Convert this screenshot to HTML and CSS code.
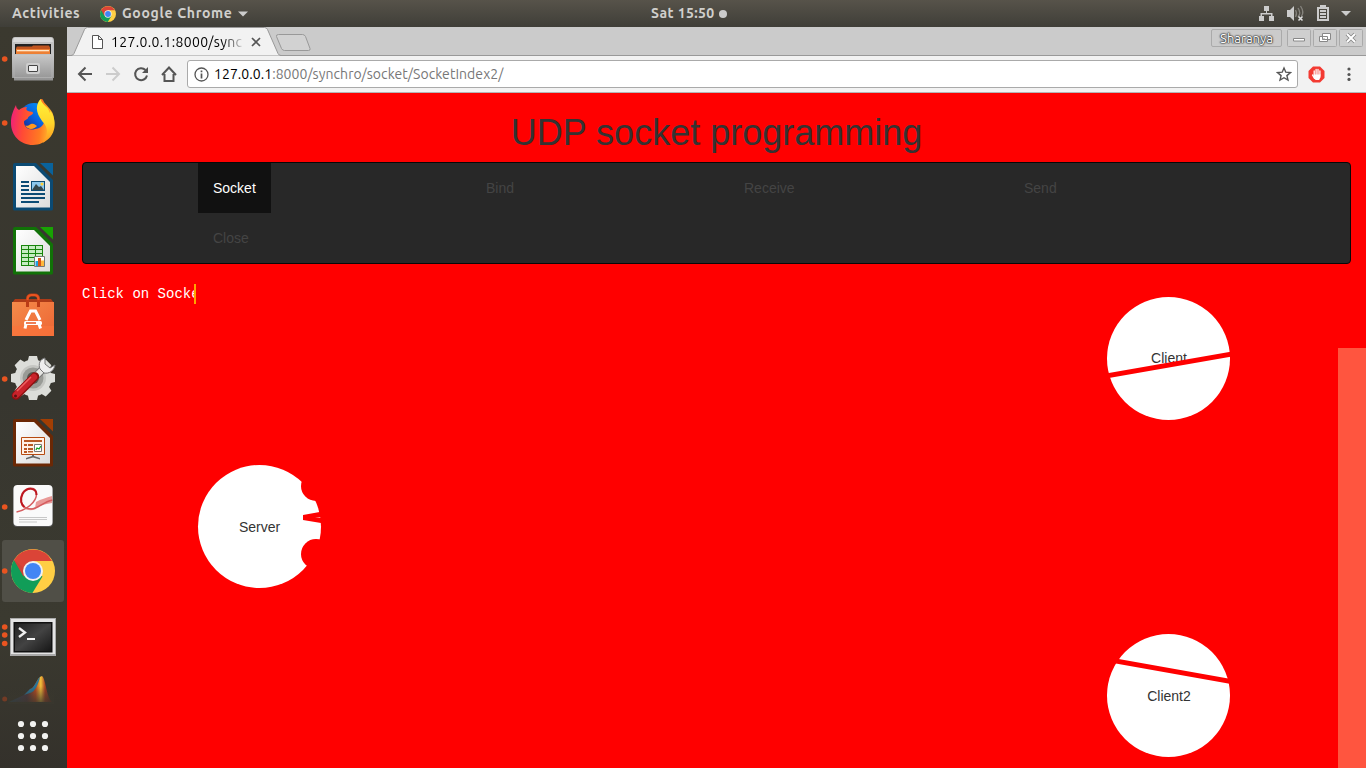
FILE: index.html
```html
<!DOCTYPE html>
<html lang="en">
<head>
<meta charset="utf-8">
<title>UDP socket programming</title>
<link rel="stylesheet" href="styles.css">
</head>
<body>
<svg class="defs" aria-hidden="true">
  <defs>
    <linearGradient id="metal" x1="0" y1="0" x2="0" y2="1"><stop offset="0" stop-color="#c9c9c9"/><stop offset="1" stop-color="#929292"/></linearGradient>
    <linearGradient id="paper" x1="0" y1="0" x2="1" y2="1"><stop offset="0" stop-color="#fff"/><stop offset="1" stop-color="#dcdcdc"/></linearGradient>
    <linearGradient id="bag" x1="0" y1="0" x2="1" y2="1"><stop offset="0" stop-color="#f58b4a"/><stop offset="1" stop-color="#ed6534"/></linearGradient>
    <linearGradient id="fox" x1="0" y1=".3" x2="1" y2=".4"><stop offset="0" stop-color="#f0207a"/><stop offset=".3" stop-color="#ff4a35"/><stop offset=".7" stop-color="#ff7a22"/><stop offset="1" stop-color="#ffc72e"/></linearGradient>
    <linearGradient id="foxtail" x1="0" y1="0" x2="0" y2="1"><stop offset="0" stop-color="#fff23a"/><stop offset=".55" stop-color="#ffd52a"/><stop offset="1" stop-color="#ff9421"/></linearGradient>
    <linearGradient id="globe" x1="1" y1="0" x2="0" y2="1"><stop offset="0" stop-color="#00aaff"/><stop offset=".5" stop-color="#0860df"/><stop offset="1" stop-color="#20126b"/></linearGradient>
    <linearGradient id="screen" x1="0" y1="0" x2="1" y2="1"><stop offset="0" stop-color="#222"/><stop offset=".5" stop-color="#434343"/><stop offset="1" stop-color="#171717"/></linearGradient>
    <linearGradient id="peak" x1="0" y1="0" x2="1" y2="0"><stop offset="0" stop-color="#264d68"/><stop offset=".42" stop-color="#4d3440"/><stop offset=".62" stop-color="#b94a20"/><stop offset=".74" stop-color="#f2c23b"/><stop offset=".84" stop-color="#a33b21"/><stop offset="1" stop-color="#562a21"/></linearGradient>
    <linearGradient id="fade" x1="0" y1="0" x2="0" y2="1"><stop offset=".4" stop-color="#39372e" stop-opacity="0"/><stop offset="1" stop-color="#39372e" stop-opacity=".85"/></linearGradient>
    <symbol id="chrome" viewBox="0 0 44 44">
      <circle cx="22" cy="22" r="22" fill="#ffce44"/>
      <path d="M22 22 2.950 11A22 22 0 0 0 21.400 44L31.500 27.500Z" fill="#119d58"/>
      <path d="M2.950 11A22 22 0 0 1 41.050 12H22L12.500 27.500Z" fill="#db4437"/>
      <path d="m2.950 11 9.600 16.500L14 20Z" fill="#a93a32" opacity=".25"/>
      <circle cx="22" cy="22" r="10" fill="#f1f1f1"/><circle cx="22" cy="22" r="8" fill="#4285f4"/>
    </symbol>
  </defs>
</svg>

<header class="panel">
  <div class="panel-left">
    <span class="activities">Activities</span>
    <svg class="mini-chrome" width="16" height="16"><use href="#chrome"/></svg>
    <span class="appname">Google Chrome</span>
    <svg width="10" height="6"><path d="M0 .5h10l-5 5z" fill="#ccc"/></svg>
  </div>
  <div class="clock"><span class="time">Sat 15:50</span><i class="dot"></i></div>
  <svg class="status" width="106" height="27" viewBox="1254 0 106 27" fill="#ccc">
    <path d="M1264 6h5v5h-2v2h5.500v3h1.500v5h-5v-5h2v-1.500h-9v1.500h2v5h-5v-5h1.500v-3h5.500v-2h-2z"/>
    <path d="M1287 10h3l4-4v15l-4-4h-3z"/>
    <path d="M1295.500 10q2 3.500 0 7M1298 8q3.500 5 0 9M1300.500 6q4 6 1 10" fill="none" stroke="#85837d" stroke-width="1.300"/>
    <path d="m1298.500 16.500 4 4m0-4-4 4" stroke="#ddd" stroke-width="1.600"/>
    <path fill-rule="evenodd" d="M1320 5h6v2h3v14h-12V7h3zm-1 4v10h8V9zm1 1h6v2h-6zm0 3h6v2h-6zm0 3h6v2h-6z"/>
    <path d="M1341 11h10l-5 5z"/>
  </svg>
</header>

<div class="desktop">
  <nav class="dock">
    <svg class="slot" viewBox="0 27 67 64">
      <path d="M12 41q0-4 3-4h36q3 0 3 4v15H12z" fill="#c4c4c4"/><path d="M14 38h38l1 4H13z" fill="#dadada"/><path d="M15 44h36v12H15z" fill="#222"/>
      <path d="M16 48l1-1.500h15l1-1h16l1 2V56H16z" fill="#c1551f"/><path d="M16 49h34v7H16z" fill="#ed8034"/><path d="M17 50h32v1.300H17z" fill="#ffe6c8"/>
      <path d="M12 54h42v24h-1v2.500H14V78h-2z" fill="url(#metal)"/><path d="M14 54.500v23h38v-23z" fill="none" stroke="#bcbcbc" stroke-width=".6"/>
      <rect x="26" y="63" width="14" height="11" rx="2" fill="#cdcdcd"/><rect x="28.500" y="65.500" width="9" height="6" rx=".5" fill="#eee" stroke="#444"/>
      <circle cx="4.700" cy="59" r="2.800" fill="#e95420"/>
    </svg>
    <svg class="slot" viewBox="0 91 67 64">
      <circle cx="34" cy="118" r="15" fill="url(#globe)"/>
      <path d="M16 105c0 2 1 4 3 5 2-2 5-3 8-3-1 2-1 3 1 4 2 1 5 0 5 2s-5 3-5 5c-1 2-4 2-4 4 0 5 5 9 11 7 8-1 11-7 9-14-1-5-5-8-5-12 0-4 3-5 4-3 2 6 11 9 11 20 1 14-8 25-21 25-13 0-22-10-22-22 0-6 1-10 5-18z" fill="url(#fox)"/>
      <path d="M40.500 99c1 4 4 6 7 9 1 2 2 3 2 5l1-2c3 5 5 10 4 16-1 8-6 13-12 16 5-7 6-13 2-19-7-8-11-17-4-25z" fill="url(#foxtail)"/>
      <path d="M25 125c2 2 4 0 6-1 3-1 4 1 6 2-2 3-9 5-12-1z" fill="#ff9820"/>
      <circle cx="4.700" cy="123" r="2.800" fill="#e95420"/>
    </svg>
    <svg class="slot" viewBox="0 155 67 64">
      <path d="M15 163h21l17 17v29q0 1.500-1.500 1.500h-37q-1.500 0-1.500-1.500v-44q0-2 2-2z" fill="#0b4a73"/><path d="M40 163h13v12.500z" fill="#0a629b"/>
      <path d="M16 166h18l16 16v25.500H16z" fill="url(#paper)"/>
      <path d="M21 181h8v2h-8zm0 4h8v2h-8zm0 4h8v2h-8zm0 4h24v2H21zm0 4h24v2H21zm0 4h18v2H21z" fill="#0c4c75"/>
      <path d="M31 181h14v10H31z" fill="#0c4c75"/><path d="M32 182h12v8H32z" fill="#8cc8ee"/><path d="m32 190 4-6 3 3 2-1 3 4z" fill="#35484c"/><circle cx="42" cy="184" r="1.500" fill="#ffcf35"/>
    </svg>
    <svg class="slot" viewBox="0 219 67 64">
      <path d="M15 227h21l17 17v29q0 1.500-1.500 1.500h-37q-1.500 0-1.500-1.500v-44q0-2 2-2z" fill="#117207"/><path d="M40 227h13v12.500z" fill="#18a303"/>
      <path d="M16 230h18l16 16v25.500H16z" fill="url(#paper)"/>
      <path d="M21 245h22v21H21z" fill="#18850d"/><path d="M22 246h6v3h-6zm7 0h6v3h-6zm7 0h6v3h-6zm-14 4h6v3h-6zm7 0h6v3h-6zm7 0h6v3h-6zm-14 4h6v3h-6zm7 0h6v3h-6zm7 0h6v3h-6zm-14 4h6v3h-6zm7 0h6v3h-6zm-7 4h6v3h-6zm7 0h6v3h-6z" fill="#c6ecc2"/>
      <path d="M34.500 256.500h10v10h-10z" fill="#fff" stroke="#777"/><path d="M35.500 261h2.500v5h-2.500z" fill="#20a0e0"/><path d="M38 258h3v8h-3z" fill="#d65516"/><path d="M41 260.500h3v5.500h-3z" fill="#ffb83c"/>
    </svg>
    <svg class="slot" viewBox="0 283 67 64">
      <path d="m15 299-3 4h42l-3-4z" fill="#ad3b18"/><path d="M12 302h42v34H12z" fill="url(#bag)"/><path d="M12 326h42v10H12z" fill="#fa743c" opacity=".65"/>
      <path d="M27.500 307v-8q0-4 4-4h3q4 0 4 4v8" fill="none" stroke="#bb3c17" stroke-width="3"/><path d="M27.500 300q0-5 4-5h3q4 0 4 5" fill="none" stroke="#e95420" stroke-width="2"/>
      <path d="m26 320 4.500-9h5l4.500 9m-14 4-1 4.500m14-4.500 1.500 4.500" fill="none" stroke="#fff" stroke-width="3"/><rect x="24" y="321" width="18" height="4" rx="1.500" fill="#fff"/><path d="M26 323h10" stroke="#e95420" stroke-width="1.500"/>
    </svg>
    <svg class="slot" viewBox="0 347 67 64">
      <g fill="#dcddd9"><circle cx="33" cy="378" r="18.500"/><g id="teeth"><path d="M29 356h8l2 8H27zm0 44h8l2-8H27zM11 374v8l8 2v-12zm44 0v8l-8 2v-12z"/></g><use href="#teeth" transform="rotate(45 33 378)"/></g>
      <circle cx="33" cy="378" r="13" fill="#c5c6c2"/><circle cx="33" cy="378" r="10.500" fill="#999b96"/><circle cx="33" cy="378" r="6" fill="#55544d"/>
      <path d="m35 377 9-9" stroke="#777" stroke-width="8"/><path d="m34 378 10-10" stroke="#e6e6e3" stroke-width="6"/>
      <path d="M45 358c-5 1-7 6-5 11l4 4c5 1 10-2 11-8l-5 3-5-4z" fill="#eee" stroke="#777"/>
      <path d="m16 395.500 19-19" stroke="#8d1010" stroke-width="8.500" stroke-linecap="round"/><path d="m16 395 18-18" stroke="#c9222a" stroke-width="6.500" stroke-linecap="round"/><path d="m17 391 14-14" stroke="#ef6262" stroke-width="1.500"/><circle cx="15.500" cy="396" r="1.500" fill="#5d1111"/>
      <circle cx="4.700" cy="379" r="2.800" fill="#e95420"/>
    </svg>
    <svg class="slot" viewBox="0 411 67 64">
      <path d="M15 419h21l17 17v29q0 1.500-1.500 1.500h-37q-1.500 0-1.500-1.500v-44q0-2 2-2z" fill="#6b2805"/><path d="M40 419h13v12.500z" fill="#a33e03"/>
      <path d="M16 422h18l16 16v25.500H16z" fill="url(#paper)"/>
      <path d="M32 454h2v2l6 2v1.500l-7-2-7 2V458l6-2z" fill="#666"/><path d="M21.500 437.500h23v17h-23z" fill="#fff2e7" stroke="#b64a10"/>
      <path d="M24 440h18v2H24zm0 4h3v2h-3zm4 0h5v2h-5zm-4 4h3v2h-3zm4 0h5v2h-5zm-4 3h3v2h-3zm4 0h5v1.500h-5z" fill="#b95824"/><path d="M34.500 444.500h7v7h-7z" fill="#fff" stroke="#777"/><path d="m36 450 1-2 2 1 2-3" fill="none" stroke="#12a326" stroke-width="1.300"/>
    </svg>
    <svg class="slot" viewBox="0 475 67 64">
      <rect x="13" y="486" width="40" height="41" rx="4" fill="#555"/><rect x="13.500" y="485" width="39" height="41" rx="4" fill="#fafafa"/>
      <path d="M36 502c5-3 10-4 16-6v7c-8 1-12 3-17 5z" fill="#e99a98"/><path d="M21 499c-1 7 6 12 14 8l1 2c-9 4-17-2-15-10z" fill="#eca7a5"/>
      <path d="M16.500 512c10-2 20-10 20-18 0-7-9-8-14-1-4 8 0 16 9 16 7 0 11-7 21-9" fill="none" stroke="#d55c5f" stroke-width="1.500"/>
      <path d="M36.500 495c0-8-10-8-14-1-3 6-1 11 2 13" fill="none" stroke="#bd1720" stroke-width="2"/>
      <path d="M19 517.500h28m-28 2h28m-28 2.500h18" stroke="#bbb" stroke-width=".8"/>
      <circle cx="4.700" cy="507" r="2.800" fill="#e95420"/>
    </svg>
    <svg class="slot" viewBox="0 539 67 64">
      <rect x="2" y="540" width="62" height="62" rx="3" fill="#504f47"/><use href="#chrome" x="11" y="549" width="44" height="44"/><circle cx="4.700" cy="571" r="2.800" fill="#e95420"/>
    </svg>
    <svg class="slot" viewBox="0 603 67 64">
      <path d="M10 618h46v38H10z" fill="#aaa"/><path d="M11 619h44v35H11z" fill="#e4e4e4"/><path d="M13.500 622h39v30.500h-39z" fill="#111"/><path d="M15 623.500h36V651H15z" fill="url(#screen)"/>
      <path d="m19 628 6 4.500-6 4.500" fill="none" stroke="#f0f0f0" stroke-width="2.300"/><path d="M27 639h8" stroke="#f5f5f5" stroke-width="2"/>
      <g fill="#e95420"><circle cx="4.700" cy="627" r="2.800"/><circle cx="4.700" cy="635" r="2.800"/><circle cx="4.700" cy="643.500" r="2.800"/></g>
    </svg>
    <svg class="slot short" viewBox="0 667 67 45">
      <path d="m9 702 15-7 6-6c5-1 7-12 12-13 4 3 4 20 10 26z" fill="url(#peak)"/><path d="m24 695 6-6c4 0 7-10 10-12-2 8-5 15-10 16z" fill="#28769a"/><path d="M8 674h46v30H8z" fill="url(#fade)"/><circle cx="4.700" cy="699" r="2.500" fill="#733b25"/>
    </svg>
    <svg class="slot apps" viewBox="0 712 67 56" fill="#f2f2f0">
      <circle cx="21" cy="724" r="3.100"/><circle cx="33" cy="724" r="3.100"/><circle cx="45" cy="724" r="3.100"/><circle cx="21" cy="736" r="3.100"/><circle cx="33" cy="736" r="3.100"/><circle cx="45" cy="736" r="3.100"/><circle cx="21" cy="748" r="3.100"/><circle cx="33" cy="748" r="3.100"/><circle cx="45" cy="748" r="3.100"/>
    </svg>
  </nav>

  <main class="browser">
    <div class="tabstrip">
      <div class="tab">
        <svg class="tab-shape" width="245" height="29" viewBox="67 27 245 29">
          <path d="M67 55.500h4q2 0 3-2l10.500-24q1-2 3-2h177q2 0 3 2l10.500 24q1 2 3 2h34" fill="#f2f2f2" stroke="#999"/>
          <path d="M278.500 34.500h24q2 0 3 2l4.500 12q.6 2-1.500 2h-24q-2 0-3-2l-5-12q-.5-2 2-2z" fill="#d2d2d2" stroke="#999"/>
          <path d="M92.500 35.500h6l4 4v9h-10zm6 0v4h4" fill="#fff" stroke="#555"/>
          <path d="m252 38 8 8m0-8-8 8" stroke="#555" stroke-width="1.700"/>
        </svg>
        <span class="tab-title">127.0.0.1:8000/sync</span>
      </div>
      <div class="window-buttons">
        <span class="user">Sharanya</span>
        <svg width="24" height="18"><rect x=".5" y=".5" width="23" height="17" rx="1"/><path d="M6.500 9.500h11v2.500h-11z" class="glyph"/></svg>
        <svg width="24" height="18"><rect x=".5" y=".5" width="23" height="17" rx="1"/><path d="M9.500 4.500h8v6h-8zM6.500 7.500h8v5h-8z" class="glyph"/><path d="M9 9.500h3v1H9z" fill="#999"/></svg>
        <svg width="24" height="18"><rect x=".5" y=".5" width="23" height="17" rx="1"/><path d="m8 5 8 8m0-8-8 8" stroke="#888" stroke-width="3.800"/><path d="m8 5 8 8m0-8-8 8" stroke="#fff" stroke-width="2"/></svg>
      </div>
    </div>
    <div class="toolbar">
      <svg class="navicons" width="120" height="37" viewBox="67 56 120 37" fill="none" stroke="#555" stroke-width="2">
        <path d="M92 74H79m6.500-6.500L79 74l6.500 6.500"/><path d="M106 74h13m-6.500-6.500L119 74l-6.500 6.500" stroke="#ccc"/>
        <path d="M145.500 70a6 6 0 1 0 1.500 5.500"/><path d="M148 67v6h-6z" fill="#555" stroke="none"/>
        <path d="m162 75 7-7.500 7 7.500m-11.500-1v7h9v-7"/>
      </svg>
      <div class="omnibox">
        <svg width="15" height="15" fill="none" stroke="#555"><circle cx="7.500" cy="7.500" r="6.500" stroke-width="1.300"/><path d="M7.500 6.500v5M7.500 3.500v1.800" stroke-width="1.700"/></svg>
        <span class="url"><b>127.0.0.1</b>:8000/synchro/socket/SocketIndex2/</span>
        <svg width="16" height="16" fill="none" stroke="#555" stroke-width="1.400"><path d="m8 2 1.800 4.200 4.700.4-3.600 3 1.100 4.500L8 11.700l-4 2.400 1.100-4.500-3.600-3 4.700-.4z"/></svg>
      </div>
      <svg class="blocker" width="17" height="17"><path d="M5 .5h7L16.500 5v7L12 16.500H5L.5 12V5z" fill="#f33a32"/><path d="M6.200 9V5m1.900 4V3.500M10 9V3.500M11.900 9V5M4.500 9l2 3.500" stroke="#fff" stroke-width="1.300" stroke-linecap="round"/><path d="M5.600 8.500h7V11l-1.500 3H7.500l-1.900-3z" fill="#fff"/></svg>
      <svg class="more" width="4" height="14" fill="#555"><circle cx="2" cy="2" r="1.600"/><circle cx="2" cy="7.500" r="1.600"/><circle cx="2" cy="12.400" r="1.600"/></svg>
    </div>
    <section class="page">
      <h1>UDP socket programming</h1>
      <div class="navbar">
        <a class="active">Socket</a><a>Bind</a><a>Receive</a><a>Send</a><a>Close</a>
      </div>
      <div class="typing">Click on Socke</div>
      <svg class="diagram" width="1299" height="504" viewBox="67 264 1299 504">
        <path d="M1338 348h28v420h-28z" fill="#ff553f"/>
        <g fill="#fff"><circle cx="259.500" cy="526.500" r="61.500"/><circle cx="1168.500" cy="358.500" r="61.500"/><circle cx="1168.500" cy="695.500" r="61.500"/></g>
        <g class="label"><text x="259.500" y="532">Server</text><text x="1169" y="363">Client</text><text x="1169" y="701">Client2</text></g>
        <g fill="red"><circle cx="316" cy="486" r="15"/><circle cx="316" cy="554" r="15"/>
          <path d="m303 515 18-3.300v5.500l-6 .4 6 .5v5l-18-3z"/>
          <path d="m1106 373.600 126-22v4.900l-126 22zM1113 658l118 21v4.900l-118-21z"/></g>
      </svg>
    </section>
  </main>
</div>
</body>
</html>
```
FILE: styles.css
```css
* { box-sizing: border-box; }
body {
  margin: 0;
  width: 1366px;
  height: 768px;
  overflow: hidden;
  font-family: Ubuntu, "Noto Sans", sans-serif;
}
svg { display: block; flex: none; }
.defs { position: absolute; width: 0; height: 0; }

.panel {
  display: grid;
  grid-template-columns: 1fr auto 1fr;
  align-items: center;
  height: 27px;
  background: linear-gradient(#57534a, #3f3e38);
  color: #d0cfcc;
  font-size: 14px;
  font-weight: 600;
  line-height: 27px;
  white-space: nowrap;
}
.panel-left { display: flex; align-items: center; padding-left: 12px; }
.activities { width: 88px; letter-spacing: .6px; }
.appname { width: 111px; margin: 0 5px 0 6px; letter-spacing: .68px; }
.clock { display: flex; align-items: center; width: 77px; margin-left: 13px; }
.time { width: 68px; letter-spacing: .4px; }
.dot { width: 8px; height: 8px; border-radius: 50%; background: #ccc; }
.status { justify-self: end; margin-right: 6px; }

.desktop { display: flex; height: 741px; }
.dock {
  width: 67px;
  flex: none;
  background: linear-gradient(#3b392f, #37362f 50%, #3b3a30 80%, #34312b);
}
.slot { width: 67px; height: 64px; }
.short { height: 45px; }
.apps { height: 56px; }

.browser { display: flex; flex-direction: column; width: 1299px; }
.tabstrip {
  display: flex;
  justify-content: space-between;
  height: 29px;
  background: #cbcbcb;
  border-bottom: 1px solid #999;
}
.tab { display: grid; width: 245px; height: 29px; }
.tab > * { grid-area: 1 / 1; }
.tab-title {
  z-index: 1;
  width: 134px;
  margin-left: 44px;
  overflow: hidden;
  font-size: 14px;
  letter-spacing: .33px;
  line-height: 30px;
  white-space: nowrap;
  color: #000;
  -webkit-mask-image: linear-gradient(90deg, #000 84%, transparent);
  mask-image: linear-gradient(90deg, #000 84%, transparent);
}
.window-buttons { display: flex; gap: 2px; padding: 2px 3px 0 0; }
.window-buttons rect { fill: #cfcfcf; stroke: #aaa; }
.glyph { fill: #fff; stroke: #888; stroke-width: 1; }
.user {
  width: 71px;
  height: 18px;
  margin-right: 3px;
  border: 1px solid #aaa;
  border-radius: 2px;
  color: #fff;
  font-size: 13px;
  line-height: 17px;
  text-align: center;
  text-shadow: 0 0 1px #333, 0 0 1px #333, 0 0 2px #333, 0 0 2px #444;
}
.toolbar {
  display: flex;
  align-items: center;
  height: 37px;
  background: #f2f2f2;
  border-bottom: 1px solid #b5b5b5;
}
.omnibox {
  display: flex;
  align-items: center;
  width: 1111px;
  height: 28px;
  padding: 0 5px 0 6px;
  border: 1px solid #aaa;
  border-radius: 3px;
  background: #fff;
}
.url { flex: 1; margin-left: 5px; color: #777; font-size: 14px; letter-spacing: .05px; line-height: 26px; }
.url b { color: #000; font-weight: 400; }
.blocker { margin-left: 10px; }
.more { margin-left: 22px; }

.page {
  flex: 1;
  background: #f00;
  color: #333;
  font-family: "Liberation Sans", Arial, sans-serif;
  font-size: 14px;
}
h1 {
  margin: 0;
  padding-top: 20px;
  height: 69px;
  font-size: 36px;
  font-weight: 400;
  line-height: 40px;
  text-align: center;
}
.navbar {
  display: grid;
  grid-template-columns: 273px 258px 280px auto;
  grid-auto-rows: 50px;
  justify-items: start;
  width: 1269px;
  height: 102px;
  margin-left: 15px;
  padding-left: 115px;
  border: 1px solid #080808;
  border-radius: 4px;
  background: #282828;
  color: #444;
}
.navbar a { padding: 0 15px; line-height: 50px; }
.navbar .active { background: #111; color: #fff; }
.typing {
  width: 114px;
  height: 20px;
  margin: 20px 0 -40px 15px;
  overflow: hidden;
  border-right: 2px solid orange;
  color: #fff;
  font: 14px/20px "Liberation Mono", monospace;
  white-space: nowrap;
}
.label { fill: #333; font-size: 14px; text-anchor: middle; }
```
